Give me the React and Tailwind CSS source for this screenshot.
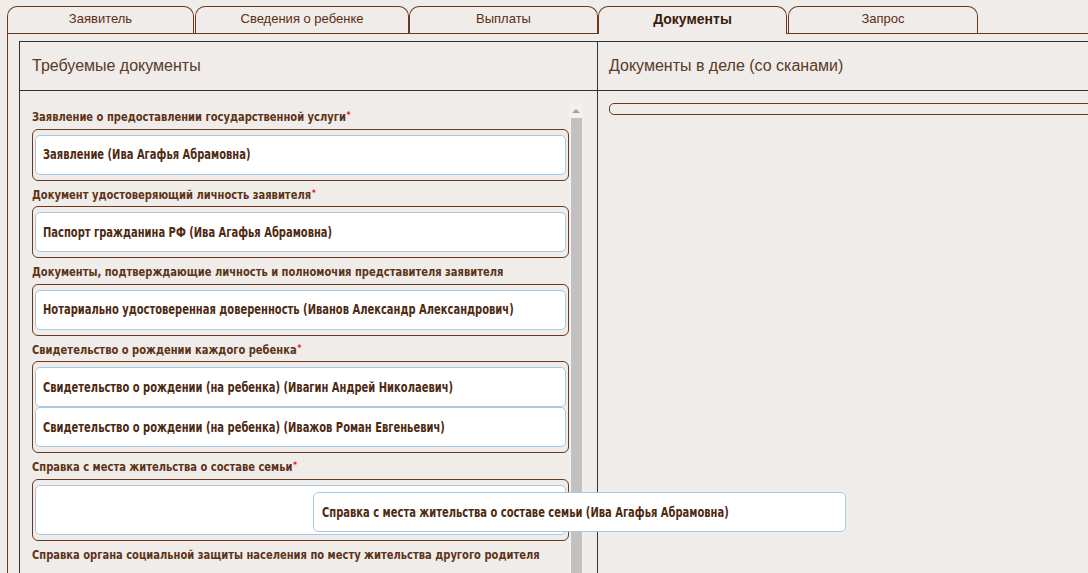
import React from "react";

const COND = "font-['DejaVu_Sans_Condensed',sans-serif]";

function Label({ text, req }) {
  return (
    <div className={`h-[25.5px] pt-[6px] leading-[16px] text-[12.5px] font-bold text-[#5c3317] whitespace-nowrap ${COND}`}>
      <span className="inline-block origin-left scale-x-[0.885]">
        {text}
        {req && <sup className="text-[#e01010] text-[9px] font-bold ml-[1px] relative top-[-3px]">*</sup>}
      </span>
    </div>
  );
}

function Item({ text, h = "h-[40px]" }) {
  return (
    <div className={`${h} bg-white border border-[#a6c8e3] rounded-[5px] pl-[7px] flex items-center text-[14px] font-bold text-[#4d2a12] whitespace-nowrap ${COND}`}>
      <span className="inline-block origin-left scale-x-[0.79]">{text}</span>
    </div>
  );
}

function Group({ children }) {
  return (
    <div className="border border-[#6b3a1e] rounded-[6px] pt-[5px] pb-[5px] px-[2px] flex flex-col">
      {children}
    </div>
  );
}

function Tab({ w, ml, label, active }) {
  return (
    <div
      className={`${w} ${ml} border border-[#6b3a1e] border-b-0 rounded-t-[10px] flex items-center justify-center ${
        active
          ? "h-[28px] -mb-px bg-[#f0ece9] relative z-10 text-[14px] font-bold text-[#3b1d0c] pb-[2px]"
          : "h-[27px] text-[13px] text-[#5c2e12] pb-[2px]"
      }`}
    >
      {label}
    </div>
  );
}

export default function App() {
  return (
    <div className="relative w-[1088px] h-[573px] overflow-hidden bg-[#f0ece9] font-['Liberation_Sans',Arial,sans-serif]">
      <div className="flex pt-[6px] pl-[7px]">
        <Tab w="w-[187px]" ml="" label="Заявитель" />
        <Tab w="w-[214px]" ml="ml-[1px]" label="Сведения о ребенке" />
        <Tab w="w-[189px]" ml="" label="Выплаты" />
        <Tab w="w-[189px]" ml="" label="Документы" active />
        <Tab w="w-[190px]" ml="ml-[1px]" label="Запрос" />
      </div>
      <div className="ml-[7px] border-l border-t border-[#6b3a1e] h-[600px] w-[1200px]">
        <div className="ml-[11px] mt-[7px] border-l border-t border-[#333] w-[1200px] h-[600px]">
          <div className="flex h-[49px] border-b border-[#333]">
            <div className="w-[578px] border-r border-[#333] pl-[12px] flex items-center text-[16px] text-[#5a3a28]">
              Требуемые документы
            </div>
            <div className="pl-[11px] flex items-center text-[16px] text-[#5a3a28]">
              Документы в деле (со сканами)
            </div>
          </div>
          <div className="flex h-[560px]">
            <div className="w-[578px] border-r border-[#333] pt-[12px] pl-[12px] flex">
              <div className="w-[537px] flex flex-col">
                <Label text="Заявление о предоставлении государственной услуги" req />
                <Group>
                  <Item text="Заявление (Ива Агафья Абрамовна)" />
                </Group>
                <Label text="Документ удостоверяющий личность заявителя" req />
                <Group>
                  <Item text="Паспорт гражданина РФ (Ива Агафья Абрамовна)" />
                </Group>
                <Label text="Документы, подтверждающие личность и полномочия представителя заявителя" />
                <Group>
                  <Item text="Нотариально удостоверенная доверенность (Иванов Александр Александрович)" />
                </Group>
                <Label text="Свидетельство о рождении каждого ребенка" req />
                <Group>
                  <Item text="Свидетельство о рождении (на ребенка) (Ивагин Андрей Николаевич)" />
                  <Item text="Свидетельство о рождении (на ребенка) (Иважов Роман Евгеньевич)" />
                </Group>
                <Label text="Справка с места жительства о составе семьи" req />
                <Group>
                  <Item text="" h="h-[50px]" />
                </Group>
                <Label text="Справка органа социальной защиты населения по месту жительства другого родителя" />
              </div>
              <div className="w-[14px] bg-[#f1f1f1] flex flex-col items-center">
                <div className="h-[15px] w-full flex items-center justify-center">
                  <div className="w-0 h-0 border-l-[4px] border-r-[4px] border-b-[4px] border-l-transparent border-r-transparent border-b-[#a3a3a3]" />
                </div>
                <div className="w-[11px] ml-[1px] flex-1 bg-[#c1c1c1]" />
              </div>
            </div>
            <div className="pl-[11px] pt-[12px]">
              <div className="h-[12px] w-[600px] border border-[#6b3a1e] rounded-[5px]" />
            </div>
          </div>
        </div>
      </div>
      <div className={`absolute left-[313px] top-[492px] w-[533px] h-[40px] bg-white border border-[#a6c8e3] rounded-[5px] pl-[8px] flex items-center text-[14px] font-bold text-[#4d2a12] whitespace-nowrap ${COND}`}>
        <span className="inline-block origin-left scale-x-[0.79]">Справка с места жительства о составе семьи (Ива Агафья Абрамовна)</span>
      </div>
    </div>
  );
}
